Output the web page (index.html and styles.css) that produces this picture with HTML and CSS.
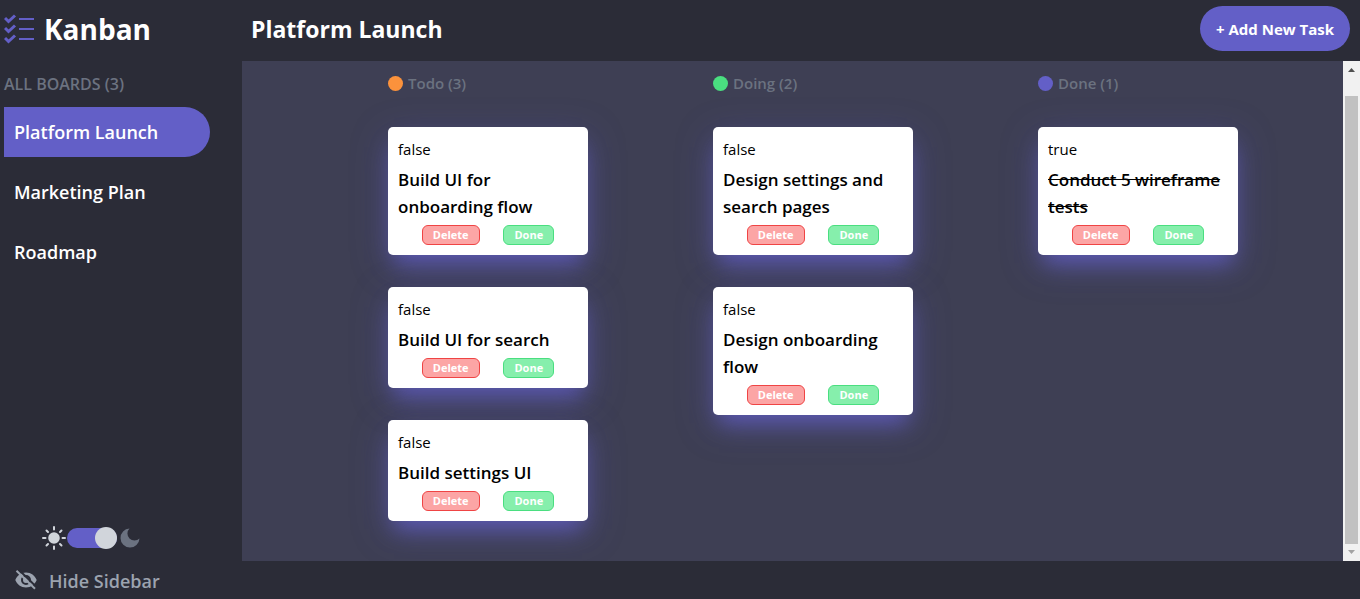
FILE: index.html
```html
<!DOCTYPE html>
<html lang="en">
<head>
<meta charset="utf-8">
<meta name="viewport" content="width=device-width, initial-scale=1">
<title>Kanban</title>
<link rel="stylesheet" href="styles.css">
</head>
<body>
<div class="app">
  <aside class="sidebar">
    <div class="brand">
      <svg class="brand-icon" viewBox="0 0 30 30" aria-hidden="true">
        <path d="M1 4l3.500 3.500L11 1.500M1 14l3.500 3.500L11 11.500M1 24l3.500 3.500L11 21.500"/>
        <path class="brand-lines" d="M15 5h15M15 15h15M15 25h15"/>
      </svg>
      <h1 class="brand-name">Kanban</h1>
    </div>
    <h2 class="boards-title">ALL BOARDS (3)</h2>
    <nav class="boards">
      <a class="board-link board-link-active" href="#platform">Platform Launch</a>
      <a class="board-link" href="#marketing">Marketing Plan</a>
      <a class="board-link" href="#roadmap">Roadmap</a>
    </nav>
    <div class="theme">
      <svg class="sun" viewBox="0 0 24 24" aria-hidden="true">
        <circle cx="12" cy="12" r="4.800"/>
        <path d="M12 1v2.500M12 20.500v2.500M1 12h2.500M20.500 12h2.500M4.500 4.500l1.500 1.500M18 18l1.500 1.500M4.500 19.500l1.500-1.500M18 6l1.500-1.500"/>
      </svg>
      <input class="switch" type="checkbox" role="switch" aria-label="Dark mode" checked>
      <svg class="moon" viewBox="0 0 20 20" aria-hidden="true">
        <path d="M9.500 .5A9.500 9.500 0 1 0 19.500 10.500 6.200 6.200 0 0 1 9.500 .5z"/>
      </svg>
    </div>
    <button class="hide" type="button">
      <svg class="hide-icon" viewBox="0 0 22 20" aria-hidden="true">
        <path class="eye" fill-rule="evenodd" d="M11 1.500C6 1.500 2 4.500.3 9 2 13.500 6 16.500 11 16.500s9-3 10.700-7.500C20 4.500 16 1.500 11 1.500zM11 4a5 5 0 1 1 0 10 5 5 0 0 1 0-10z"/>
        <circle class="eye" cx="11" cy="9" r="3"/>
        <path class="slash-gap" d="M3.500 -1.500L22 16.500"/>
        <path class="slash" d="M1.500 -.2L20 17.800"/>
      </svg>
      Hide Sidebar
    </button>
  </aside>
  <header class="topbar">
    <h2 class="board-name">Platform Launch</h2>
    <button class="add" type="button">+ Add New Task</button>
  </header>
  <main class="board">
    <div class="columns">
      <section class="column">
        <h3 class="column-title"><span class="dot dot-todo"></span>Todo (3)</h3>
        <article class="card"><p class="state">false</p><h4 class="task">Build UI for onboarding flow</h4><div class="actions"><button class="action delete" type="button">Delete</button><button class="action done" type="button">Done</button></div></article>
        <article class="card"><p class="state">false</p><h4 class="task">Build UI for search</h4><div class="actions"><button class="action delete" type="button">Delete</button><button class="action done" type="button">Done</button></div></article>
        <article class="card"><p class="state">false</p><h4 class="task">Build settings UI</h4><div class="actions"><button class="action delete" type="button">Delete</button><button class="action done" type="button">Done</button></div></article>
      </section>
      <section class="column">
        <h3 class="column-title"><span class="dot dot-doing"></span>Doing (2)</h3>
        <article class="card"><p class="state">false</p><h4 class="task">Design settings and search pages</h4><div class="actions"><button class="action delete" type="button">Delete</button><button class="action done" type="button">Done</button></div></article>
        <article class="card"><p class="state">false</p><h4 class="task">Design onboarding flow</h4><div class="actions"><button class="action delete" type="button">Delete</button><button class="action done" type="button">Done</button></div></article>
      </section>
      <section class="column">
        <h3 class="column-title"><span class="dot dot-done"></span>Done (1)</h3>
        <article class="card"><p class="state">true</p><h4 class="task task-complete">Conduct 5 wireframe tests</h4><div class="actions"><button class="action delete" type="button">Delete</button><button class="action done" type="button">Done</button></div></article>
      </section>
    </div>
    <div class="scrollbar" aria-hidden="true">
      <svg class="arrow" viewBox="0 0 17 17"><path fill="#505050" d="M5 11h7L8.500 7z"/></svg>
      <div class="thumb"></div>
      <svg class="arrow" viewBox="0 0 17 17"><path fill="#a3a3a3" d="M5 6h7L8.500 10z"/></svg>
    </div>
  </main>
</div>
</body>
</html>
```
FILE: styles.css
```css
* { box-sizing: border-box; margin: 0; }

body {
  background: #2b2c37;
  color: #fff;
  font-family: "Open Sans", "Noto Sans", sans-serif;
  font-size: 16px;
  line-height: 24px;
}

button { border: 0; font: inherit; color: inherit; cursor: pointer; }
a { color: inherit; text-decoration: none; }

.app {
  display: grid;
  grid-template-columns: 242px 1fr;
  grid-template-rows: 61px 1fr;
  min-height: 100vh;
}

.sidebar {
  grid-row: 1 / 3;
  display: flex;
  flex-direction: column;
  padding: 0 32px 6px 4px;
}

.brand { display: flex; align-items: center; gap: 10px; height: 58px; }
.brand-icon { width: 30px; height: 30px; fill: none; stroke: #635fc7; stroke-width: 3; }
.brand-lines { stroke-width: 2; }
.brand-name { font-size: 28px; line-height: 36px; font-weight: 700; }

.boards-title { margin: 14px 0 11px; font-size: 16px; font-weight: 600; color: #6b7280; }

.boards { display: flex; flex-direction: column; gap: 10px; }
.board-link {
  padding: 11px 10px;
  border-radius: 0 25px 25px 0;
  font-size: 18px;
  line-height: 28px;
  font-weight: 600;
}
.board-link-active { background: #635fc7; }

.theme { display: flex; align-items: center; margin-top: auto; padding-left: 38px; }
.sun { width: 24px; height: 24px; fill: #d1d5db; stroke: #d1d5db; stroke-width: 2; stroke-linecap: round; }
.switch {
  appearance: none;
  display: flex;
  align-items: center;
  justify-content: flex-end;
  width: 50px;
  height: 20px;
  margin: 0 3px 0 1px;
  border-radius: 10px;
  background: #635fc7;
}
.switch::before { content: ""; flex: none; width: 22px; height: 22px; border-radius: 50%; background: #d1d5db; }
.moon { width: 20px; height: 20px; fill: #6b7280; }

.hide {
  display: flex;
  align-items: center;
  gap: 12px;
  margin-top: 19px;
  padding: 0 11px;
  background: none;
  color: #9ca3af;
  font-size: 18px;
  font-weight: 600;
}
.hide-icon { width: 22px; height: 20px; overflow: visible; }
.eye { fill: #9ca3af; }
.slash, .slash-gap { fill: none; stroke-width: 2; stroke: #9ca3af; }
.slash-gap { stroke: #2b2c37; }

.topbar { display: flex; align-items: center; justify-content: space-between; padding: 0 10px 4px 9px; }
.board-name { font-size: 23px; line-height: 32px; font-weight: 700; }
.add { padding: 11px 16px 10px; border-radius: 24px; background: #635fc7; font-size: 15px; font-weight: 700; }

.board { display: flex; margin-bottom: 38px; background: #3e3f54; overflow: hidden; }
.columns { flex: 1; display: flex; justify-content: space-between; padding: 10px 105px 40px 146px; }
.column { display: flex; flex-direction: column; gap: 32px; width: 200px; }
.column-title {
  display: flex;
  align-items: center;
  gap: 5px;
  font-size: 15px;
  font-weight: 600;
  color: #6b7280;
}
.dot { width: 15px; height: 15px; border-radius: 50%; }
.dot-todo { background: #fb923c; }
.dot-doing { background: #4ade80; }
.dot-done { background: #635fc7; }

.card {
  display: flex;
  flex-direction: column;
  gap: 5px;
  padding: 10px;
  border-radius: 5px;
  background: #fff;
  color: #000;
  box-shadow: 0 10px 36px 0 rgba(99, 95, 199, 0.35), 0 14px 20px -6px rgba(99, 95, 199, 0.7);
}
.state { font-size: 15px; }
.task { font-size: 17px; line-height: 27px; font-weight: 600; }
.task-complete { text-decoration: line-through; }

.actions { display: flex; justify-content: space-evenly; }
.action {
  padding: 0 10px;
  border: 1px solid;
  border-radius: 6px;
  color: #fff;
  font-size: 11px;
  line-height: 18px;
  font-weight: 700;
}
.delete { background: #fca5a5; border-color: #ef4444; }
.done { background: #86efac; border-color: #4ade80; }

.scrollbar { display: flex; flex-direction: column; width: 17px; background: #f1f1f1; }
.arrow { width: 17px; height: 17px; }
.thumb { flex: 1; margin: 18px 2px 0; background: #c1c1c1; }
```
